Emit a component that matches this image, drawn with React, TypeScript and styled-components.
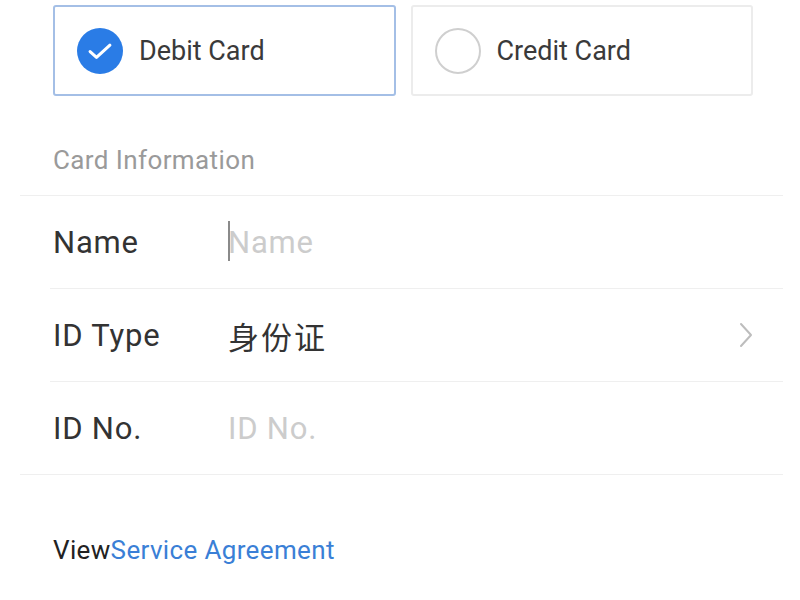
import React, { useState } from "react";
import styled, { createGlobalStyle } from "styled-components";

const GlobalStyle = createGlobalStyle`
  html, body {
    margin: 0;
    padding: 0;
    background: #ffffff;
  }
  body {
    font-family: Roboto, "Noto Sans", "Noto Sans CJK SC", sans-serif;
    color: #333333;
  }
`;

const Page = styled.div`
  width: 800px;
  height: 600px;
  padding-top: 5px;
  box-sizing: border-box;
  overflow: hidden;
`;

const CardTypeRow = styled.div`
  display: flex;
  gap: 15px;
  padding: 0 47px 0 53px;
`;

const CardOption = styled.div<{ $active: boolean }>`
  flex: 1;
  height: 91px;
  box-sizing: border-box;
  display: flex;
  align-items: center;
  gap: 16px;
  padding-left: 22px;
  border: 2px solid ${({ $active }) => ($active ? "#a4bfe6" : "#ececec")};
  border-radius: 3px;
  cursor: pointer;
`;

const Radio = styled.span<{ $active: boolean }>`
  width: 46px;
  height: 46px;
  box-sizing: border-box;
  border-radius: 50%;
  display: flex;
  align-items: center;
  justify-content: center;
  background: ${({ $active }) => ($active ? "#2a7ce6" : "#ffffff")};
  border: ${({ $active }) => ($active ? "none" : "2.5px solid #cfcfcf")};
`;

const OptionText = styled.span`
  font-size: 27px;
  color: #3a3a3a;
`;

const SectionTitle = styled.div`
  height: 99px;
  padding-left: 53px;
  padding-top: 49px;
  box-sizing: border-box;
  font-size: 26px;
  letter-spacing: 0.4px;
  color: #9a9a9a;
`;

const FormList = styled.div`
  margin: 0 17px 0 20px;
  border-top: 1px solid #efefef;
  border-bottom: 1px solid #efefef;
`;

const FieldRow = styled.div<{ $last?: boolean }>`
  height: 92px;
  margin-left: 30px;
  padding-left: 3px;
  padding-right: 30px;
  display: flex;
  align-items: center;
  border-bottom: ${({ $last }) => ($last ? "none" : "1px solid #efefef")};
`;

const Label = styled.span`
  width: 175px;
  flex-shrink: 0;
  font-size: 31px;
  letter-spacing: 0.8px;
  color: #333333;
`;

const ValueWrap = styled.div`
  flex: 1;
  display: flex;
  align-items: center;
  position: relative;
`;

const Caret = styled.span`
  position: absolute;
  left: 0;
  top: 50%;
  width: 1.5px;
  height: 40px;
  margin-top: -21px;
  background: #8a8a8a;
`;

const Input = styled.input`
  flex: 1;
  border: none;
  outline: none;
  padding: 0;
  font-family: inherit;
  font-size: 31px;
  letter-spacing: 0.8px;
  color: #333333;
  background: transparent;
  &::placeholder {
    color: #cccccc;
  }
`;

const Value = styled.span`
  flex: 1;
  font-size: 31px;
  letter-spacing: 2px;
  color: #333333;
`;

const Agreement = styled.div`
  padding: 60px 0 0 53px;
  font-size: 26px;
  letter-spacing: 0.35px;
  color: #222222;
`;

const Link = styled.a`
  color: #3a7fd6;
  text-decoration: none;
`;

const CheckIcon = () => (
  <svg width="28" height="28" viewBox="0 0 24 24" fill="none">
    <path d="M3.5 12.5l5.5 5L20.5 7" stroke="#ffffff" strokeWidth="2.6" strokeLinecap="round" strokeLinejoin="round" />
  </svg>
);

const Chevron = () => (
  <svg width="14" height="26" viewBox="0 0 14 26" fill="none">
    <path d="M2 2l10 11L2 24" stroke="#bdbdbd" strokeWidth="2" strokeLinecap="round" strokeLinejoin="round" />
  </svg>
);

const cardTypes = ["Debit Card", "Credit Card"];

export default function App() {
  const [selected, setSelected] = useState(0);
  const [name, setName] = useState("");
  const [idNo, setIdNo] = useState("");

  return (
    <Page>
      <GlobalStyle />
      <CardTypeRow>
        {cardTypes.map((t, i) => (
          <CardOption key={t} $active={selected === i} onClick={() => setSelected(i)}>
            <Radio $active={selected === i}>{selected === i && <CheckIcon />}</Radio>
            <OptionText>{t}</OptionText>
          </CardOption>
        ))}
      </CardTypeRow>

      <SectionTitle>Card Information</SectionTitle>

      <FormList>
        <FieldRow>
          <Label>Name</Label>
          <ValueWrap>
            {name === "" && <Caret />}
            <Input placeholder="Name" value={name} onChange={(e) => setName(e.target.value)} />
          </ValueWrap>
        </FieldRow>
        <FieldRow>
          <Label>ID Type</Label>
          <Value>身份证</Value>
          <Chevron />
        </FieldRow>
        <FieldRow $last>
          <Label>ID No.</Label>
          <ValueWrap>
            <Input placeholder="ID No." value={idNo} onChange={(e) => setIdNo(e.target.value)} />
          </ValueWrap>
        </FieldRow>
      </FormList>

      <Agreement>
        View<Link href="#">Service Agreement</Link>
      </Agreement>
    </Page>
  );
}
